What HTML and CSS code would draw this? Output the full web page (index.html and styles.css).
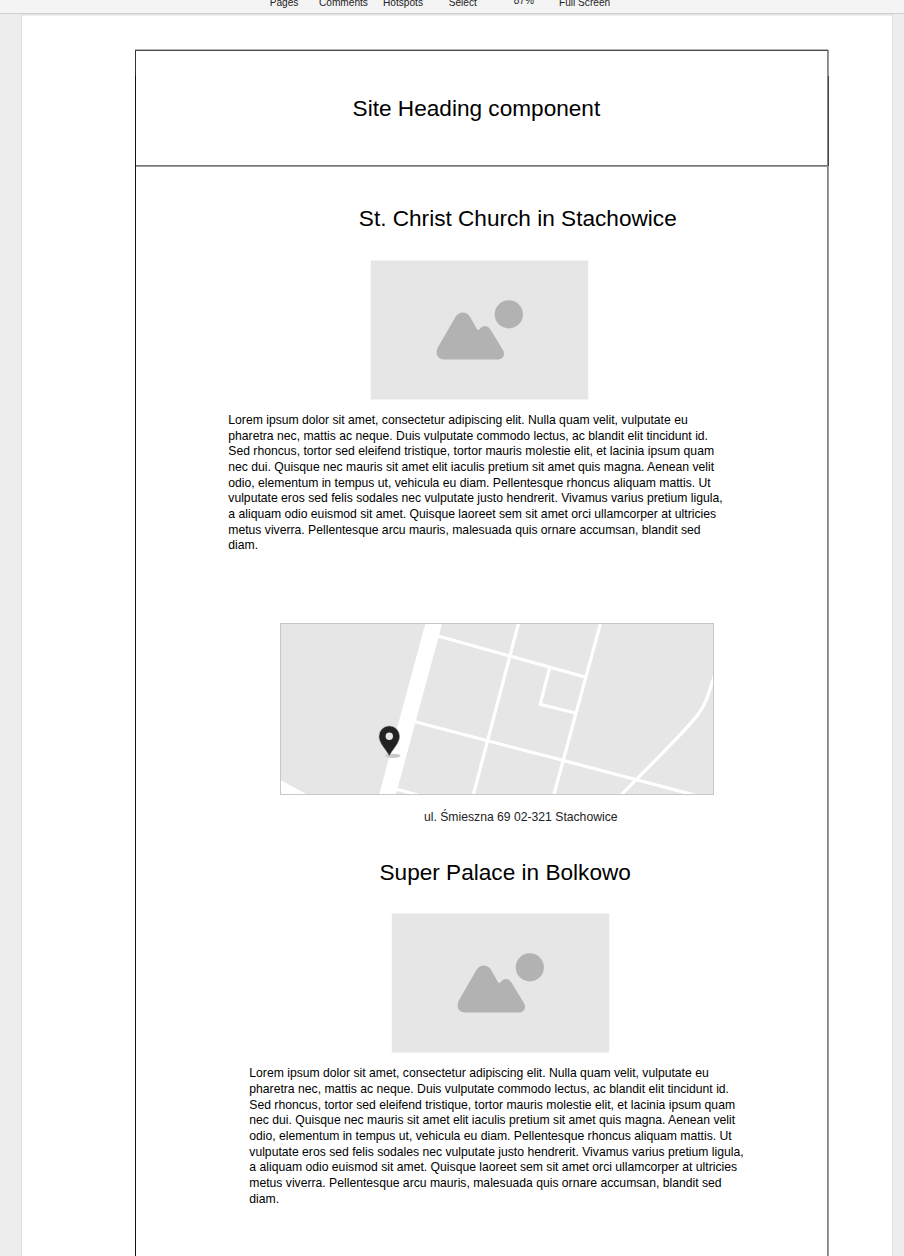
FILE: index.html
```html
<!DOCTYPE html>
<html lang="en">
<head>
<meta charset="utf-8">
<title>Wireframe preview</title>
<link rel="stylesheet" href="styles.css">
</head>
<body>
<svg class="defs" width="0" height="0" aria-hidden="true">
  <symbol id="picture" viewBox="370 260 219 140">
    <rect x="370.8" y="260.5" width="217.5" height="139" fill="#e6e6e6"/>
    <circle cx="508.8" cy="314.4" r="14.1" fill="#b2b2b2"/>
    <path fill="#b2b2b2" d="M455.3 317.2C459 311 466.500 311 470.300 317.200L476.300 328Q478 331.500 479.700 329C483 324.700 487.800 325 490.700 330L502.600 349.500C506 355 503 359.500 497.500 359.500H444.500C437.500 359.500 434.800 353.500 437.800 347.500Z"/>
  </symbol>
</svg>
<header class="toolbar">
  <span class="tool pages">Pages</span>
  <span class="tool comments">Comments</span>
  <span class="tool hotspots">Hotspots</span>
  <span class="tool select">Select</span>
  <span class="tool percent">87%</span>
  <span class="tool full">Full Screen</span>
</header>
<main class="sheet">
  <div class="frame">
    <div class="site-heading"><h1>Site Heading component</h1></div>
    <section class="place">
      <h2>St. Christ Church in Stachowice</h2>
      <svg class="picture"><use href="#picture"/></svg>
      <p class="copy">Lorem ipsum dolor sit amet, consectetur adipiscing elit. Nulla quam velit, vulputate eu<br>pharetra nec, mattis ac neque. Duis vulputate commodo lectus, ac blandit elit tincidunt id.<br>Sed rhoncus, tortor sed eleifend tristique, tortor mauris molestie elit, et lacinia ipsum quam<br>nec dui. Quisque nec mauris sit amet elit iaculis pretium sit amet quis magna. Aenean velit<br>odio, elementum in tempus ut, vehicula eu diam. Pellentesque rhoncus aliquam mattis. Ut<br>vulputate eros sed felis sodales nec vulputate justo hendrerit. Vivamus varius pretium ligula,<br>a aliquam odio euismod sit amet. Quisque laoreet sem sit amet orci ullamcorper at ultricies<br>metus viverra. Pellentesque arcu mauris, malesuada quis ornare accumsan, blandit sed<br>diam.</p>
      <svg class="map" viewBox="280 623 434 172">
        <rect x="280" y="623" width="434" height="172" fill="#e6e6e6"/>
        <g fill="#fff">
          <path d="M425.500 623H442.300L395.800 795H379Z"/>
          <path d="M280 779.800L308 795H280Z"/>
        </g>
        <g fill="none" stroke="#fff" stroke-width="3.200">
          <path d="M438 636L585 677"/>
          <path d="M415 721.800L562.700 760.300L702 797"/>
          <path d="M518.600 623L473 796"/>
          <path d="M600.600 623L553.500 796"/>
          <path d="M549.600 668L540.200 704.300L575.500 713"/>
          <path d="M396 789L425 797"/>
          <path d="M715 674C709 692 706 704 699 713C688 729 656 759 620 796"/>
        </g>
        <ellipse cx="392.800" cy="755.800" rx="7.700" ry="2.100" fill="#c9c9c9"/>
        <path d="M389.300 755.800C386.500 750 379 743.500 379 736.200A10.300 10.300 0 0 1 399.600 736.200C399.600 743.500 392 750 389.300 755.800Z" fill="#222" stroke="#999" stroke-width=".5"/>
        <circle cx="389.300" cy="736.200" r="3.700" fill="#e6e6e6"/>
        <rect x="280.500" y="623.500" width="433" height="171" fill="none" stroke="#c8c8c8"/>
      </svg>
      <p class="address">ul. Śmieszna 69 02-321 Stachowice</p>
    </section>
    <section class="place second">
      <h2>Super Palace in Bolkowo</h2>
      <svg class="picture"><use href="#picture"/></svg>
      <p class="copy">Lorem ipsum dolor sit amet, consectetur adipiscing elit. Nulla quam velit, vulputate eu<br>pharetra nec, mattis ac neque. Duis vulputate commodo lectus, ac blandit elit tincidunt id.<br>Sed rhoncus, tortor sed eleifend tristique, tortor mauris molestie elit, et lacinia ipsum quam<br>nec dui. Quisque nec mauris sit amet elit iaculis pretium sit amet quis magna. Aenean velit<br>odio, elementum in tempus ut, vehicula eu diam. Pellentesque rhoncus aliquam mattis. Ut<br>vulputate eros sed felis sodales nec vulputate justo hendrerit. Vivamus varius pretium ligula,<br>a aliquam odio euismod sit amet. Quisque laoreet sem sit amet orci ullamcorper at ultricies<br>metus viverra. Pellentesque arcu mauris, malesuada quis ornare accumsan, blandit sed<br>diam.</p>
    </section>
  </div>
</main>
</body>
</html>
```
FILE: styles.css
```css
* { box-sizing: border-box; }
body {
  margin: 0;
  height: 1256px;
  overflow: hidden;
  display: flex;
  flex-direction: column;
  background: #ededed;
  font-family: "Liberation Sans", Arial, sans-serif;
  color: #000;
}
h1, h2, p { margin: 0; font-weight: 400; white-space: nowrap; }
.defs { position: absolute; }
.toolbar {
  flex: none;
  display: flex;
  height: 14px;
  overflow: hidden;
  padding-left: 269.700px;
  background: #f4f4f4;
  border-bottom: 1px solid #d0d0d0;
  font-size: 10.150px;
  line-height: 12px;
  color: #222;
}
.tool { flex: none; margin-top: -3px; white-space: nowrap; }
.pages { width: 49.300px; }
.comments { width: 64px; }
.hotspots { width: 65.700px; }
.select { width: 65px; }
.percent { width: 45.300px; margin-top: -5px; }
.sheet {
  flex: none;
  width: 872px;
  height: 1242px;
  margin-left: 21px;
  padding: 34px 0 0 113px;
  background: #fff;
  border: 1px solid #e0e0e0;
  border-bottom: 0;
  box-shadow: inset 0 1px #f0f0f0;
}
.frame {
  width: 694px;
  height: 1207px;
  background:
    linear-gradient(#b8b8b8 50%, #4a4a4a 50%) 0 0 / 693px 2px no-repeat,
    linear-gradient(#111, #111) 0 27px / 1px 1180px no-repeat,
    linear-gradient(#333, #333) 0 1px / 1px 26px no-repeat,
    linear-gradient(#444, #444) 693px 27px / 1px 90px no-repeat,
    linear-gradient(90deg, #888 50%, #999 50%) 692px 1px / 2px 1206px no-repeat;
}
.site-heading {
  height: 118px;
  padding: 47px 0 0 217.600px;
  background: linear-gradient(#777 50%, #999 50%) 1px 116px / 692px 2px no-repeat;
}
h1, h2 { font-size: 22.620px; line-height: 26px; }
.place {
  display: flex;
  flex-direction: column;
  align-items: flex-start;
  height: 653px;
  padding: 39px 0 0 93px;
}
.place h2 { margin-left: 130.800px; }
.picture { flex: none; width: 219px; height: 140px; margin: 28px 0 0 142px; }
.copy {
  margin: 13px 0 0 .3px;
  font-size: 12.180px;
  line-height: 15.660px;
}
.map { width: 434px; height: 172px; margin: 69px 0 0 52px; flex: none; }
.address { margin: 15px 0 0 196px; font-size: 12.180px; line-height: 14px; color: #222; }
.second { height: auto; padding: 40px 0 0 114px; }
.second h2 { margin-left: 130.500px; }
.second .picture { margin-top: 27px; }
.second .copy { margin-top: 13.400px; }
```
